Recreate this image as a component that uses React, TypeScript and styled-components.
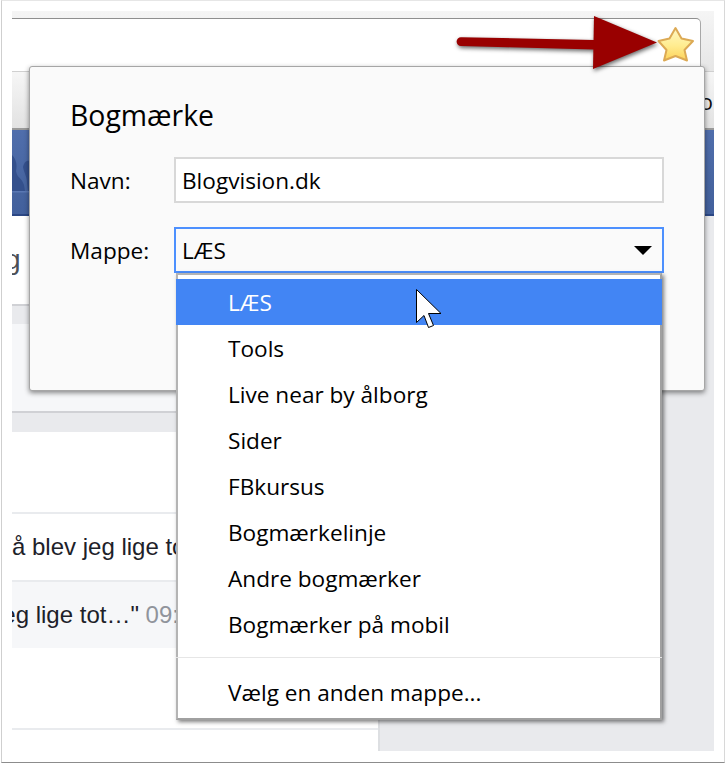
import React from "react";
import styled, { createGlobalStyle } from "styled-components";

const Global = createGlobalStyle`
  html, body { margin: 0; padding: 0; background: #fff; }
  body { font-family: "Open Sans", "Noto Sans", sans-serif; }
`;

const Frame = styled.div`
  box-sizing: border-box;
  width: 724px;
  height: 763px;
  margin-left: 1px;
  padding: 10px 10px 11px 10px;
  background: #fff;
  border: 1px solid #cfcfcf;
  border-top-color: #e6e6e6;
  border-right-color: #d8d8d8;
  border-bottom-color: #8c8c8c;
`;

const Browser = styled.div`
  position: relative;
  width: 702px;
  height: 740px;
  display: flex;
  flex-direction: column;
  overflow: visible;
`;

const Toolbar = styled.div`
  flex: none;
  height: 60px;
  box-sizing: border-box;
  padding: 7px 13px 0 0;
  background: linear-gradient(#f5f5f5, #e6e6e6);
  display: flex;
`;

const UrlBox = styled.div`
  flex: 1;
  background: #fff;
  border-top: 1px solid #8f8f8f;
  border-right: 1px solid #a8a8a8;
  border-top-right-radius: 5px;
`;

const BookmarkBar = styled.div`
  flex: none;
  height: 57px;
  box-sizing: border-box;
  border-top: 1px solid #d0d0d0;
  background: linear-gradient(#f6f6f6, #e2e2e2);
  display: flex;
  justify-content: flex-end;
  align-items: center;
  overflow: hidden;
  color: #111;
  font-size: 22px;
  padding: 2px 1px 0 0;
`;

const Banner = styled.div`
  flex: none;
  position: relative;
  height: 86px;
  box-sizing: border-box;
  margin-top: 2px;
  box-shadow: 0 -2px 0 #9a9a9a;
  background: linear-gradient(#506eac 0%, #46649f 70%, #42609d 100%);
  border-bottom: 2px solid #2b4785;
  overflow: hidden;
`;

const BannerArt = styled.svg`
  display: block;
  width: 18px;
  height: 84px;
`;

const Main = styled.div`
  flex: 1;
  display: flex;
  min-height: 0;
`;

const Feed = styled.div`
  flex: none;
  width: 368px;
  box-sizing: border-box;
  background: #fff;
  border-right: 2px solid #dddfe2;
  display: flex;
  flex-direction: column;
  overflow: hidden;
  font-family: "Liberation Sans", Arial, sans-serif;
  color: #1d2129;
`;

const Side = styled.div`
  flex: 1;
  background: #e9eaed;
`;

const Heading = styled.div`
  flex: none;
  height: 88px;
  display: flex;
  align-items: center;
  font-size: 28px;
  color: #4b4f56;
  white-space: nowrap;
`;

const Cropped = styled.span<{ $shift: number }>`
  display: block;
  margin-left: ${(p) => -p.$shift}px;
  white-space: nowrap;
`;

const Strip = styled.div<{ $h: number; $bg: string }>`
  flex: none;
  height: ${(p) => p.$h}px;
  background: ${(p) => p.$bg};
`;

const Divider = styled.div<{ $c: string }>`
  flex: none;
  height: 2px;
  background: ${(p) => p.$c};
`;

const Gap = styled.div<{ $h: number }>`
  flex: none;
  height: ${(p) => p.$h}px;
`;

const FeedRow = styled.div<{ $shaded?: boolean }>`
  flex: none;
  height: 66px;
  display: flex;
  align-items: center;
  font-size: 24px;
  background: ${(p) => (p.$shaded ? "#f6f7f9" : "#fff")};
`;

const Time = styled.span`
  color: #90949c;
`;

const Dialog = styled.div`
  position: absolute;
  left: 17px;
  top: 55px;
  box-sizing: border-box;
  width: 676px;
  height: 325px;
  padding: 30px 40px 0 40px;
  background: #fafafa;
  border: 1px solid #a6a6a6;
  border-radius: 3px;
  box-shadow: 0 2px 5px rgba(0, 0, 0, 0.45);
  color: #000;
  font-family: "Open Sans", "Noto Sans", sans-serif;
`;

const Title = styled.h1`
  margin: 0 0 24px;
  height: 36px;
  font-size: 28.4px;
  line-height: 36px;
  font-weight: 400;
`;

const FieldRow = styled.div`
  display: flex;
  align-items: center;
  height: 46px;
  margin-bottom: 24px;
`;

const Label = styled.label`
  flex: none;
  width: 104px;
  font-size: 22.6px;
`;

const Field = styled.div<{ $focused?: boolean }>`
  flex: 1;
  box-sizing: border-box;
  height: 46px;
  padding: 0 6px;
  display: flex;
  align-items: center;
  justify-content: space-between;
  font-size: 22.6px;
  border: 2px solid ${(p) => (p.$focused ? "#4d90fe" : "#d8d8d8")};
  background: ${(p) => (p.$focused ? "#fafafa" : "#fff")};
`;

const Caret = styled.span`
  width: 0;
  height: 0;
  margin-right: 4px;
  border-left: 9px solid transparent;
  border-right: 9px solid transparent;
  border-top: 9px solid #000;
`;

const Menu = styled.div`
  position: absolute;
  left: 146px;
  top: 206px;
  box-sizing: border-box;
  width: 486px;
  height: 447px;
  padding-top: 4px;
  background: #fff;
  border: 2px solid #b4b4b4;
  border-bottom-color: #a0a0a0;
  border-right-color: #a0a0a0;
  box-shadow: 2px 2px 4px rgba(0, 0, 0, 0.5);
`;

const Option = styled.div<{ $active?: boolean }>`
  height: 46px;
  margin: 0 -2px;
  padding-left: 52px;
  display: flex;
  align-items: center;
  font-size: 22.6px;
  color: ${(p) => (p.$active ? "#fff" : "#000")};
  background: ${(p) => (p.$active ? "#4285f4" : "transparent")};
`;

const MenuRule = styled.div`
  height: 1px;
  margin: 10px -2px 11px;
  background: #e6e6e6;
`;

const Overlay = styled.svg<{ $x: number; $y: number; $w: number; $h: number }>`
  position: absolute;
  left: ${(p) => p.$x}px;
  top: ${(p) => p.$y}px;
  width: ${(p) => p.$w}px;
  height: ${(p) => p.$h}px;
  overflow: visible;
`;

const ArrowSvg = styled(Overlay)`
  filter: drop-shadow(1px 2px 2px rgba(0, 0, 0, 0.6));
`;

const folders = [
  "LÆS",
  "Tools",
  "Live near by ålborg",
  "Sider",
  "FBkursus",
  "Bogmærkelinje",
  "Andre bogmærker",
  "Bogmærker på mobil",
];

export default function App() {
  return (
    <>
      <Global />
      <Frame>
        <Browser>
          <Toolbar>
            <UrlBox />
          </Toolbar>
          <BookmarkBar>o</BookmarkBar>
          <Banner>
            <BannerArt viewBox="12 130 18 84">
              <path d="M12 155C16 159 17.500 165 16 171C17 178 22 178 24 185L25 191L12 191Z" fill="#34508c" />
              <path d="M30 161C26 160 24 163 23 167C24 173 27 176 27 183L28 191L30 191Z" fill="#34508c" />
              <rect x="12" y="191" width="18" height="1.500" fill="#5a78b4" />
            </BannerArt>
          </Banner>
          <Main>
            <Feed>
              <Heading>
                <Cropped $shift={7}>g</Cropped>
              </Heading>
              <Divider $c="#d0d1d5" />
              <Strip $h={18} $bg="#e9eaed" />
              <Strip $h={87} $bg="#f6f7f9" />
              <Divider $c="#d0d1d5" />
              <Strip $h={19} $bg="#e9eaed" />
              <Gap $h={80} />
              <Divider $c="#e9ebee" />
              <FeedRow>
                <Cropped $shift={16}>Så blev jeg lige tot</Cropped>
              </FeedRow>
              <Divider $c="#e9ebee" />
              <FeedRow $shaded>
                <Cropped $shift={15}>jeg lige tot…" <Time>09:12</Time></Cropped>
              </FeedRow>
              <Gap $h={80} />
              <Divider $c="#e9ebee" />
            </Feed>
            <Side />
          </Main>

          <Dialog>
            <Title>Bogmærke</Title>
            <FieldRow>
              <Label>Navn:</Label>
              <Field>Blogvision.dk</Field>
            </FieldRow>
            <FieldRow>
              <Label>Mappe:</Label>
              <Field $focused>
                LÆS
                <Caret />
              </Field>
            </FieldRow>
            <Menu>
              {folders.map((f, i) => (
                <Option key={f} $active={i === 0}>
                  {f}
                </Option>
              ))}
              <MenuRule />
              <Option>Vælg en anden mappe...</Option>
            </Menu>
          </Dialog>

          <ArrowSvg $x={445} $y={3} $w={205} $h={62} viewBox="457 14 205 62">
            <path d="M461 37.200L594 40L594 49.500L461 46A4.400 4.400 0 0 1 461 37.200Z" fill="#990000" />
            <path d="M594 16L657 42.500L593 69Z" fill="#990000" />
          </ArrowSvg>
          <Overlay $x={644} $y={14} $w={40} $h={40} viewBox="656 25 40 40">
            <defs>
              <linearGradient id="starFill" x1="0" y1="0" x2="0" y2="1">
                <stop offset="0" stopColor="#fff8c4" />
                <stop offset="0.55" stopColor="#ffec8f" />
                <stop offset="1" stopColor="#fdd25a" />
              </linearGradient>
            </defs>
            <path
              d="M675.500 28L681.500 38.500L693 41L684.500 50L687 60.500L675.500 56L664 60.500L666.500 50L658.500 41L669.500 38.500Z"
              fill="url(#starFill)"
              stroke="#dcaa55"
              strokeWidth="2"
              strokeLinejoin="round"
            />
          </Overlay>
          <Overlay $x={404} $y={278} $w={26} $h={40} viewBox="416 289 26 40">
            <path
              d="M416.500 289.500L416.500 322.500L424 315.500L428.500 327.500L433.500 325.500L428.500 313.500L441 313.500Z"
              fill="#fff"
              stroke="#000"
              strokeWidth="1"
            />
          </Overlay>
        </Browser>
      </Frame>
    </>
  );
}
